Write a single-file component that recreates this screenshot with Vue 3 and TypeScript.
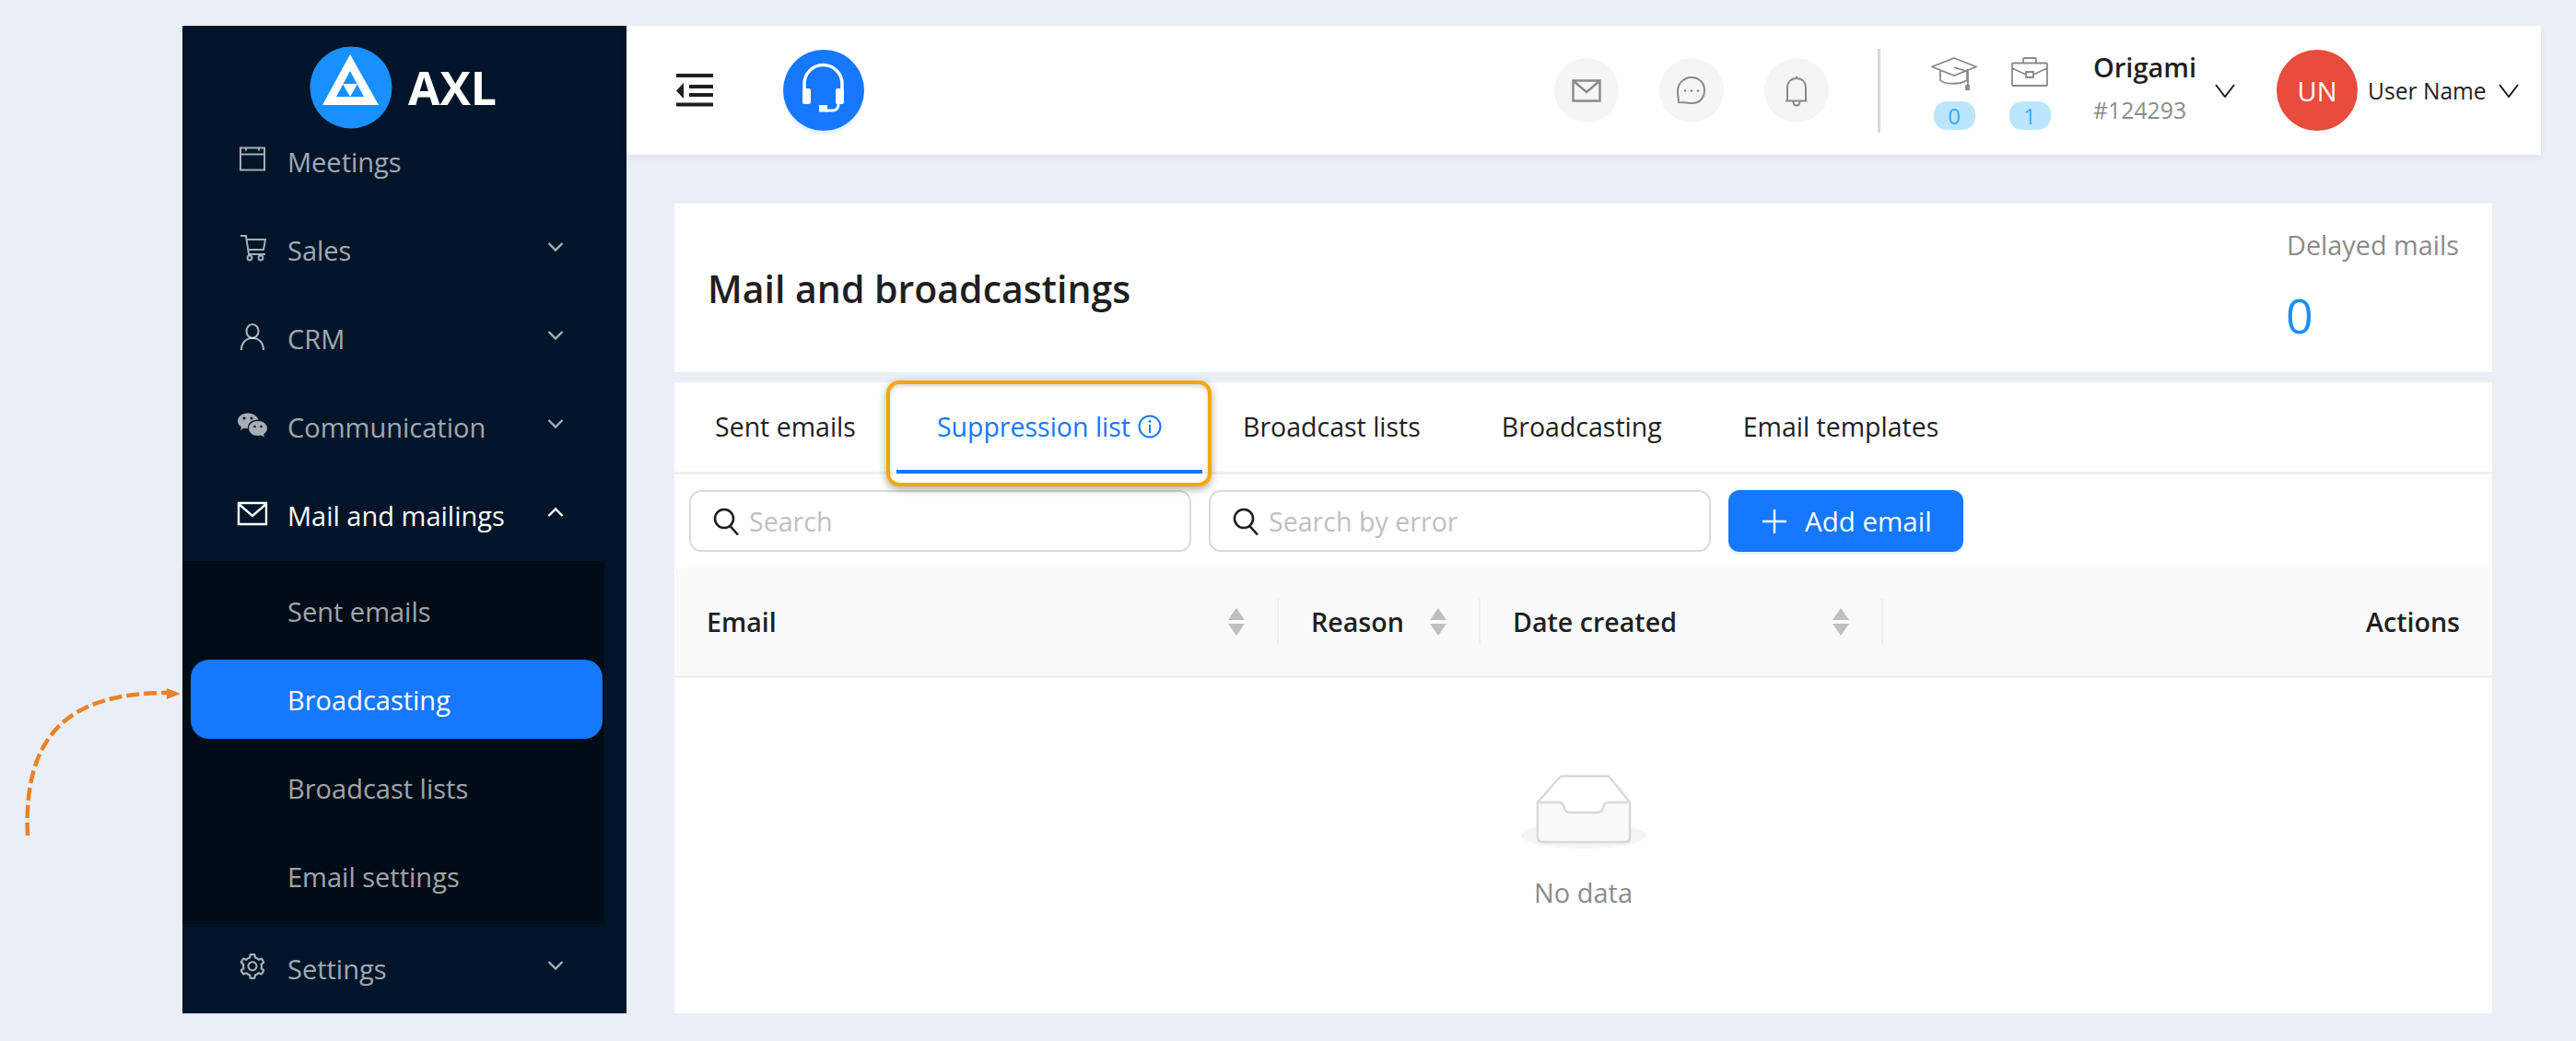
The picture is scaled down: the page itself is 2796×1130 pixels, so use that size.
<script setup lang="ts">
interface MenuItem {
  label: string
  icon: string
  chevron?: boolean
}

const gear =
  'M924.8 625.7l-65.5-56c3.1-19 4.7-38.4 4.7-57.8s-1.6-38.8-4.7-57.8l65.5-56a32.03 32.03 0 0 0 9.3-35.2l-.9-2.6a443.74 443.74 0 0 0-79.7-137.9l-1.8-2.1a32.12 32.12 0 0 0-35.1-9.5l-81.3 28.9c-30-24.6-63.5-44-99.7-57.6l-15.7-85a32.05 32.05 0 0 0-25.8-25.7l-2.7-.5c-52.1-9.4-106.9-9.4-159 0l-2.7.5a32.05 32.05 0 0 0-25.8 25.7l-15.8 85.4a351.86 351.86 0 0 0-99 57.4l-81.9-29.1a32 32 0 0 0-35.1 9.5l-1.8 2.1a446.02 446.02 0 0 0-79.7 137.9l-.9 2.6c-4.5 12.5-.8 26.5 9.3 35.2l66.3 56.6c-3.1 18.8-4.6 38-4.6 57.1 0 19.2 1.5 38.4 4.6 57.1L99 625.5a32.03 32.03 0 0 0-9.3 35.2l.9 2.6c18.1 50.4 44.9 96.9 79.7 137.9l1.8 2.1a32.12 32.12 0 0 0 35.1 9.5l81.9-29.1c29.8 24.5 63.1 43.9 99 57.4l15.8 85.4a32.05 32.05 0 0 0 25.8 25.7l2.7.5a449.4 449.4 0 0 0 159 0l2.7-.5a32.05 32.05 0 0 0 25.8-25.7l15.7-85a350 350 0 0 0 99.7-57.6l81.3 28.9a32 32 0 0 0 35.1-9.5l1.8-2.1c34.8-41.1 61.6-87.5 79.7-137.9l.9-2.6c4.5-12.3.8-26.3-9.3-35zM788.3 465.9c2.5 15.1 3.8 30.6 3.8 46.1s-1.3 31-3.8 46.1l-6.6 40.1 74.7 63.9a370.03 370.03 0 0 1-42.6 73.6L721 702.8l-31.4 25.8c-23.9 19.6-50.5 35-79.3 45.8l-38.1 14.3-17.9 97a377.5 377.5 0 0 1-85 0l-17.9-97.2-37.8-14.5c-28.5-10.8-55-26.2-78.7-45.7l-31.4-25.9-93.4 33.2c-17-22.9-31.2-47.6-42.6-73.6l75.5-64.5-6.5-40c-2.4-14.9-3.7-30.3-3.7-45.5 0-15.3 1.2-30.6 3.7-45.5l6.5-40-75.5-64.5c11.3-26.1 25.6-50.7 42.6-73.6l93.4 33.2 31.4-25.9c23.7-19.5 50.2-34.9 78.7-45.7l37.9-14.3 17.9-97.2c28.1-3.2 56.8-3.2 85 0l17.9 97 38.1 14.3c28.7 10.8 55.4 26.2 79.3 45.8l31.4 25.8 92.8-32.9c17 22.9 31.2 47.6 42.6 73.6L781.8 426l6.5 39.9zM512 326c-97.2 0-176 78.8-176 176s78.8 176 176 176 176-78.8 176-176-78.8-176-176-176zm79.2 255.2A111.6 111.6 0 0 1 512 614c-29.9 0-58-11.7-79.2-32.8A111.6 111.6 0 0 1 400 502c0-29.9 11.7-58 32.8-79.2C454 401.6 482.1 390 512 390c29.9 0 58 11.6 79.2 32.8A111.6 111.6 0 0 1 624 502c0 29.9-11.7 58-32.8 79.2z'

const topItems: MenuItem[] = [
  { label: 'Meetings', icon: 'meetings' },
  { label: 'Sales', icon: 'sales', chevron: true },
  { label: 'CRM', icon: 'crm', chevron: true },
  { label: 'Communication', icon: 'chat', chevron: true }
]
const subItems = ['Sent emails', 'Broadcasting', 'Broadcast lists', 'Email settings']
const tabs = ['Sent emails', 'Suppression list', 'Broadcast lists', 'Broadcasting', 'Email templates']
const searches = ['Search', 'Search by error']
const columns = ['Email', 'Reason', 'Date created']
</script>

<template>
  <div class="page">
    <aside class="sidebar">
      <div class="logo">
        <svg class="logo-mark" viewBox="0 0 90 90">
          <circle cx="45" cy="45" r="44.5" fill="#1890ff" />
          <path d="M44 9 75 64H14z" fill="#fff" />
          <path d="M44 27 59 55H29z" fill="#1890ff" />
          <path d="M36 41H52L44 55z" fill="#fff" />
        </svg>
        <span class="logo-text">AXL</span>
      </div>

      <div v-for="item in topItems" :key="item.label" class="row">
        <svg class="row-icon" viewBox="0 0 36 36">
          <g v-if="item.icon === 'meetings'" fill="none" stroke="currentColor" stroke-width="2">
            <path d="M5 5.5h26v24H5zM5 12.5h26M11 5.5v3M25 5.5v3" />
          </g>
          <g v-else-if="item.icon === 'sales'" fill="none" stroke="currentColor" stroke-width="2">
            <path d="M5 5h6l3 20h18M11 9h21l-2 11H13" />
            <circle cx="15" cy="29" r="2.4" />
            <circle cx="27" cy="29" r="2.4" />
          </g>
          <g v-else-if="item.icon === 'crm'" fill="none" stroke="currentColor" stroke-width="2.2">
            <ellipse cx="18" cy="12.5" rx="6.5" ry="7.5" />
            <path d="M6 33c0-8 5-13 12-13s12 5 12 13" />
          </g>
          <g v-else fill="currentColor">
            <path d="M13 5.500C6.500 5.500 2 9.500 2 14c0 2.800 1.600 5 4 6.500L5 24l4-2.200c1.200.3 2.300.5 4 .4C12.500 16.500 17 12.500 24.500 12.500 23 8.500 18.500 5.500 13 5.500z" />
            <path d="M24 14c-5.800 0-10 3.500-10 8s4.200 8 10 8c1.200 0 2.400-.2 3.500-.5l3.500 1.900-.9-3.200c2.400-1.500 3.900-3.700 3.900-6.200 0-4.500-4.200-8-10-8z" />
            <circle cx="9" cy="11" r="1.500" fill="#001529" />
            <circle cx="17" cy="11" r="1.500" fill="#001529" />
            <circle cx="20.500" cy="20" r="1.300" fill="#001529" />
            <circle cx="27.500" cy="20" r="1.300" fill="#001529" />
          </g>
        </svg>
        <span class="row-label">{{ item.label }}</span>
        <svg v-if="item.chevron" class="row-chevron" viewBox="0 0 18 12">
          <path d="M1.500 2 9 9.500 16.500 2" fill="none" stroke="currentColor" stroke-width="2.400" />
        </svg>
      </div>

      <div class="row row-open">
        <svg class="row-icon" viewBox="0 0 36 36">
          <path d="M3 7h30v23H3zM3 8l15 13L33 8" fill="none" stroke="currentColor" stroke-width="2.400" />
        </svg>
        <span class="row-label">Mail and mailings</span>
        <svg class="row-chevron" viewBox="0 0 18 12">
          <path d="M1.500 10 9 2.500 16.500 10" fill="none" stroke="currentColor" stroke-width="2.400" />
        </svg>
      </div>

      <div class="submenu">
        <div
          v-for="sub in subItems"
          :key="sub"
          class="sub-row"
          :class="{ 'sub-active': sub === 'Broadcasting' }"
        >
          {{ sub }}
        </div>
      </div>

      <div class="row">
        <svg class="row-icon" viewBox="-60 -60 1144 1144">
          <path :d="gear" fill="currentColor" />
        </svg>
        <span class="row-label">Settings</span>
        <svg class="row-chevron" viewBox="0 0 18 12">
          <path d="M1.500 2 9 9.500 16.500 2" fill="none" stroke="currentColor" stroke-width="2.400" />
        </svg>
      </div>
    </aside>

    <div class="main">
      <header class="topbar">
        <svg class="collapse" viewBox="0 0 40 36">
          <path d="M0 2h40M14 14h26M14 23h26M0 33.500h40" stroke="#1f1f1f" stroke-width="4" fill="none" />
          <path d="M0 18.500 8 10v17z" fill="#1f1f1f" />
        </svg>
        <div class="support">
          <svg viewBox="0 0 88 88">
            <path
              d="M23 43v-6a20.500 20.500 0 0 1 41 0v7"
              fill="none"
              stroke="#fff"
              stroke-width="3.500"
            />
            <rect x="21" y="42" width="9" height="17" rx="2" fill="#fff" />
            <rect x="57" y="42" width="9" height="17" rx="2" fill="#fff" />
            <path d="M60 58v2a6 6 0 0 1-6 6h-8" fill="none" stroke="#fff" stroke-width="3" />
            <rect x="39" y="60" width="9" height="7.500" fill="#fff" />
          </svg>
        </div>

        <div class="round round-first">
          <svg viewBox="0 0 70 70" fill="none" stroke="#8a8a8a" stroke-width="2.400">
            <path d="M20.500 24.500h29v22h-29zM21 25l14 12 14-12" />
          </svg>
        </div>
        <div class="round">
          <svg viewBox="0 0 70 70" fill="none" stroke="#8a8a8a" stroke-width="2">
            <path d="M35 21c8 0 14 6 14 14 0 8-5 14-13 14-3 0-7-1-15-1 0-3-1-6-1-12 0-9 7-15 15-15z" />
            <circle cx="28" cy="35.500" r="1.300" fill="#8a8a8a" stroke="none" />
            <circle cx="35" cy="35.500" r="1.300" fill="#8a8a8a" stroke="none" />
            <circle cx="42" cy="35.500" r="1.300" fill="#8a8a8a" stroke="none" />
          </svg>
        </div>
        <div class="round">
          <svg viewBox="0 0 70 70" fill="none" stroke="#8a8a8a" stroke-width="2">
            <path d="M25 46V33c0-7 4-11 10-11s10 4 10 11v13M23 46.500h23.500M35 22v-2M31.500 47c0 6 7 6 7 0" />
          </svg>
        </div>

        <div class="vline"></div>

        <div class="stat stat-cap">
          <svg class="stat-icon" viewBox="0 0 50 36" fill="none" stroke="#8a8a8a" stroke-width="1.800">
            <path d="M25 1 49 10.500 25 20 1 10.500zM10 15v10c4 5 22 5 29 0V13M25 11l15 5v16" />
            <path d="M38 35v-4h3v4z" fill="#8a8a8a" />
          </svg>
          <span class="badge">0</span>
        </div>
        <div class="stat stat-case">
          <svg class="stat-icon" viewBox="0 0 50 36" fill="none" stroke="#8a8a8a" stroke-width="1.800">
            <path d="M7 6.500h36a1 1 0 0 1 1 1V30a1 1 0 0 1-1 1H7a1 1 0 0 1-1-1V7.500a1 1 0 0 1 1-1zM18 6V2.500a1.500 1.500 0 0 1 1.500-1.500h11a1.500 1.500 0 0 1 1.500 1.500V6M6 12l15 7M44 12l-15 7M21 16h8v6h-8z" />
          </svg>
          <span class="badge">1</span>
        </div>

        <div class="account">
          <div class="account-name">Origami</div>
          <div class="account-id">#124293</div>
        </div>
        <svg class="dark-chevron account-chevron" viewBox="0 0 22 15">
          <path d="M1 1 11 14 21 1" fill="none" stroke="#1f1f1f" stroke-width="2" />
        </svg>
        <div class="avatar">UN</div>
        <span class="user-name">User Name</span>
        <svg class="dark-chevron user-chevron" viewBox="0 0 22 15">
          <path d="M1 1 11 14 21 1" fill="none" stroke="#1f1f1f" stroke-width="2" />
        </svg>
      </header>

      <section class="title-card">
        <h1 class="title">Mail and broadcastings</h1>
        <div class="delayed">
          <div class="delayed-label">Delayed mails</div>
          <div class="delayed-value">0</div>
        </div>
      </section>

      <section class="list-card">
        <nav class="tabs">
          <div
            v-for="tab in tabs"
            :key="tab"
            class="tab"
            :class="{ 'tab-active': tab === 'Suppression list' }"
          >
            <span>{{ tab }}</span>
            <template v-if="tab === 'Suppression list'">
              <svg class="info" viewBox="0 0 26 26">
                <circle cx="13" cy="13" r="11.500" fill="none" stroke="currentColor" stroke-width="2" />
                <path d="M13 11v9" stroke="currentColor" stroke-width="2" />
                <circle cx="13" cy="7.500" r="1.400" fill="currentColor" />
              </svg>
              <span class="tab-line"></span>
              <span class="tab-mark"></span>
            </template>
          </div>
        </nav>

        <div class="toolbar">
          <label v-for="s in searches" :key="s" class="search">
            <svg viewBox="0 0 28 30" fill="none" stroke="#1f1f1f" stroke-width="2.600">
              <circle cx="12" cy="12" r="10" />
              <path d="M18.500 20 27 29.500" />
            </svg>
            <span class="placeholder">{{ s }}</span>
          </label>
          <button class="add" type="button">
            <svg viewBox="0 0 26 26">
              <path d="M13 0v26M0 13h26" stroke="#fff" stroke-width="2.400" />
            </svg>
            Add email
          </button>
        </div>

        <div class="thead">
          <div v-for="c in columns" :key="c" class="th">
            <span>{{ c }}</span>
            <svg class="sort" viewBox="0 0 18 30">
              <path d="M9 0 18 13H0zM0 17h18L9 30z" fill="#bfbfbf" />
            </svg>
          </div>
          <div class="th th-actions">Actions</div>
        </div>

        <div class="empty">
          <svg class="empty-art" viewBox="0 0 136 88">
            <ellipse cx="68" cy="72" rx="68" ry="14" fill="#f5f5f5" />
            <path
              d="M18 36 42 8.500Q43 7.500 45 7.500H93Q95 7.500 96 8.500L118 36V74Q118 79 112 79H24Q18 79 18 74Z"
              fill="#fff"
              stroke="#d9d9d9"
              stroke-width="2.400"
            />
            <path
              d="M18 36H41Q46 36 47 42 48 47 53 47H83Q88 47 89 42 90 36 96 36H118V74Q118 79 112 79H24Q18 79 18 74Z"
              fill="#fafafa"
              stroke="#d9d9d9"
              stroke-width="2.400"
            />
          </svg>
          <div class="empty-text">No data</div>
        </div>
      </section>
    </div>

    <svg class="arrow" viewBox="0 0 200 170">
      <path
        d="M30 160C25 50 75 5 182 5"
        fill="none"
        stroke="#e8832a"
        stroke-width="4.500"
        stroke-dasharray="14 5"
      />
      <path d="M181 0 196 6 181 12z" fill="#e8832a" />
    </svg>
  </div>
</template>

<style>
html,
body {
  margin: 0;
  background: #eaeef6;
}
</style>

<style scoped>
.page {
  position: relative;
  box-sizing: border-box;
  width: 2796px;
  height: 1130px;
  padding: 28px 38px 30px 198px;
  display: flex;
  background: #eaeef6;
  font-family: "Open Sans", "Noto Sans", sans-serif;
  color: #1f1f1f;
  overflow: hidden;
}

.sidebar {
  width: 482px;
  flex: none;
  background: #001529;
  overflow: hidden;
  color: rgba(255, 255, 255, 0.65);
  font-size: 29px;
}
.logo {
  height: 99px;
  box-sizing: border-box;
  padding-top: 22px;
  padding-left: 138px;
  display: flex;
  align-items: flex-start;
}
.logo-mark {
  width: 90px;
  height: 90px;
  flex: none;
}
.logo-text {
  margin-left: 17px;
  height: 90px;
  line-height: 90px;
  font-size: 50px;
  font-weight: 700;
  color: #fff;
}
.row {
  height: 96px;
  display: flex;
  align-items: center;
  padding-left: 58px;
}
.row-open {
  color: #fff;
}
.row-icon {
  width: 36px;
  height: 36px;
  flex: none;
  margin-right: 20px;
  margin-top: -4px;
}
.row-label {
  flex: 1;
}
.row-chevron {
  width: 18px;
  height: 12px;
  flex: none;
  margin-right: 68px;
  margin-top: -6px;
}
.submenu {
  width: 458px;
  box-sizing: border-box;
  margin-top: 2px;
  padding: 11px 0 9px 9px;
  background: #000c17;
  display: flex;
  flex-direction: column;
  gap: 10px;
}
.sub-row {
  height: 86px;
  padding-left: 105px;
  display: flex;
  align-items: center;
  border-radius: 20px;
  width: 447px;
  box-sizing: border-box;
}
.sub-active {
  background: #1677ff;
  color: #fff;
}

.main {
  flex: 1;
  min-width: 0;
  display: flex;
  flex-direction: column;
}
.topbar {
  height: 140px;
  flex: none;
  background: #fff;
  display: flex;
  align-items: center;
  box-shadow: 0 3px 8px rgba(0, 21, 41, 0.05);
}
.collapse {
  width: 40px;
  height: 36px;
  margin-left: 54px;
  flex: none;
}
.support {
  width: 88px;
  height: 88px;
  margin-left: 76px;
  flex: none;
  border-radius: 50%;
  background: #1677ff;
  box-shadow: 0 4px 0 #e6f4ff;
}
.support svg {
  display: block;
  width: 88px;
  height: 88px;
}
.round {
  width: 70px;
  height: 70px;
  margin-left: 44px;
  flex: none;
  border-radius: 50%;
  background: #f5f5f5;
}
.round-first {
  margin-left: 749px;
}
.round svg {
  display: block;
  width: 70px;
  height: 70px;
}
.vline {
  width: 3px;
  height: 91px;
  margin-left: 53px;
  background: #d9d9d9;
  flex: none;
}
.stat {
  width: 50px;
  flex: none;
  display: flex;
  flex-direction: column;
  align-items: center;
  margin-top: 7px;
}
.stat-cap {
  margin-left: 55px;
}
.stat-case {
  margin-left: 32px;
}
.stat-icon {
  width: 50px;
  height: 36px;
  margin-bottom: 12px;
}
.badge {
  width: 45px;
  height: 31px;
  line-height: 31px;
  text-align: center;
  border-radius: 14px;
  background: #bae7ff;
  color: #40a9ff;
  font-size: 24px;
}
.account {
  margin-left: 44px;
  width: 132px;
  flex: none;
  margin-bottom: 4px;
}
.account-name {
  height: 46px;
  line-height: 46px;
  font-size: 29px;
  font-weight: 600;
}
.account-id {
  height: 46px;
  line-height: 46px;
  font-size: 24.8px;
  color: #8c8c8c;
}
.dark-chevron {
  width: 22px;
  height: 15px;
  flex: none;
}
.avatar {
  width: 88px;
  height: 88px;
  margin-left: 45px;
  flex: none;
  border-radius: 50%;
  background: #e74c3c;
  color: #fff;
  font-size: 29px;
  display: flex;
  align-items: center;
  justify-content: center;
}
.user-name {
  margin-left: 11px;
  width: 142px;
  flex: none;
  font-size: 24.6px;
}

.title-card {
  height: 183px;
  flex: none;
  margin: 53px 53px 0 52px;
  padding: 0 36px;
  background: #fff;
  display: flex;
  justify-content: space-between;
  align-items: center;
}
.title {
  margin: 0;
  font-size: 41px;
  font-weight: 600;
}
.delayed {
  width: 188px;
  align-self: flex-start;
  padding-top: 26px;
}
.delayed-label {
  line-height: 38px;
  font-size: 28.8px;
  color: #8c8c8c;
  white-space: nowrap;
  text-align: right;
}
.delayed-value {
  margin-top: 24px;
  line-height: 66px;
  font-size: 52px;
  color: #1890ff;
}
.list-card {
  flex: 1;
  min-height: 0;
  margin: 11px 53px 0 52px;
  background: #fff;
}
.tabs {
  height: 100px;
  box-sizing: border-box;
  border-bottom: 3px solid #f0f0f0;
  display: flex;
  font-size: 28.5px;
}
.tab {
  position: relative;
  height: 100px;
  box-sizing: border-box;
  padding: 0 44px 4px;
  display: flex;
  align-items: center;
  white-space: nowrap;
}
.tab-active {
  color: #1677ff;
}
.info {
  width: 26px;
  height: 26px;
  margin-left: 8px;
}
.tab-line {
  position: absolute;
  left: 0;
  right: 0;
  bottom: 1px;
  height: 4px;
  background: #1677ff;
}
.tab-mark {
  position: absolute;
  left: -11px;
  right: -10px;
  top: -2px;
  bottom: -13px;
  border: 4px solid #f5a800;
  border-radius: 14px;
  box-shadow: 0 3px 8px rgba(0, 0, 0, 0.35), inset 0 2px 4px rgba(0, 0, 0, 0.18);
}
.toolbar {
  height: 101px;
  box-sizing: border-box;
  padding: 17px 16px 17px;
  display: flex;
  gap: 19px;
}
.search {
  width: 545px;
  height: 67px;
  box-sizing: border-box;
  border: 2.500px solid #d9d9d9;
  border-radius: 13px;
  padding-left: 24px;
  display: flex;
  align-items: center;
  font-size: 28.6px;
}
.search svg {
  width: 28px;
  height: 30px;
  flex: none;
  margin-right: 11px;
}
.placeholder {
  color: #bfbfbf;
}
.add {
  width: 255px;
  height: 67px;
  border: 0;
  border-radius: 12px;
  padding: 0 0 0 37px;
  background: #1677ff;
  color: #fff;
  font: inherit;
  font-size: 29.500px;
  display: flex;
  align-items: center;
  box-shadow: 0 3px 0 #e6f4ff;
}
.add svg {
  width: 26px;
  height: 26px;
  margin-right: 20px;
}
.thead {
  height: 120px;
  box-sizing: border-box;
  border-bottom: 3px solid #f0f0f0;
  border-top-left-radius: 12px;
  background: #fafafa;
  display: grid;
  grid-template-columns: 656px 219px 437px 1fr;
  align-items: center;
  font-size: 28.6px;
  font-weight: 600;
}
.th {
  position: relative;
  height: 50px;
  padding: 0 35px 0 35px;
  display: flex;
  align-items: center;
  justify-content: space-between;
  box-sizing: border-box;
  border-right: 2px solid #f0f0f0;
}
.th-actions {
  justify-content: flex-end;
  border-right: 0;
}
.sort {
  width: 18px;
  height: 30px;
}
.empty {
  display: flex;
  flex-direction: column;
  align-items: center;
}
.empty-art {
  width: 136px;
  height: 88px;
  margin-top: 99px;
}
.empty-text {
  margin-top: 26px;
  font-size: 29px;
  line-height: 40px;
  color: #8c8c8c;
}
.arrow {
  position: absolute;
  left: 0;
  top: 747px;
  width: 200px;
  height: 170px;
}
</style>
